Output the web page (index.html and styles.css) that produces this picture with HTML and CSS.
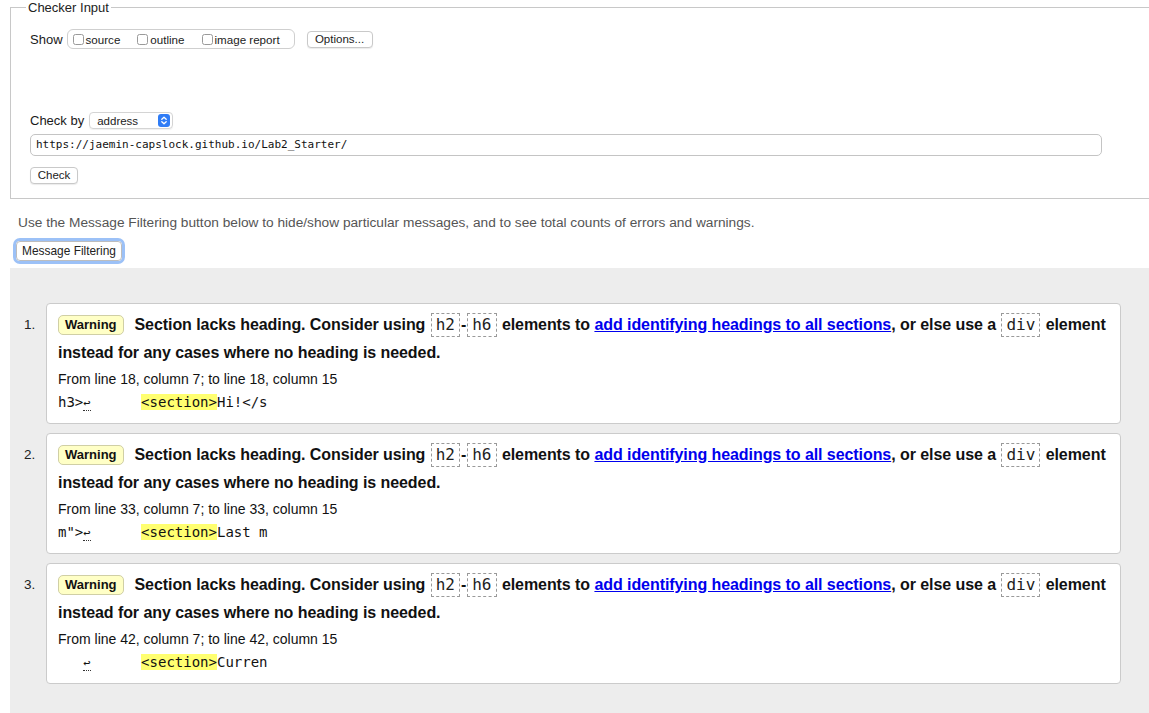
FILE: index.html
```html
<!DOCTYPE html>
<html lang="en">
<head>
<meta charset="utf-8">
<title>Checker</title>
<link rel="stylesheet" href="styles.css">
</head>
<body>
<fieldset class="checker">
  <legend class="legend">Checker Input</legend>
  <div class="show-row">
    <span class="label">Show</span>
    <span class="group">
      <label class="opt"><input type="checkbox" class="cb">source</label>
      <label class="opt"><input type="checkbox" class="cb">outline</label>
      <label class="opt"><input type="checkbox" class="cb">image report</label>
    </span>
    <button class="btn btn-options">Options...</button>
  </div>
  <div class="checkby-row">
    <span class="label">Check by</span>
    <span class="select">address
      <svg class="stepper" width="12" height="13" viewBox="0 0 12 13"><rect width="12" height="13" rx="3" fill="#2f7cf6"/><path d="M3.8 5.2 L6 3.2 L8.2 5.2 M3.8 7.8 L6 9.8 L8.2 7.8" fill="none" stroke="#fff" stroke-width="1.3" stroke-linecap="round" stroke-linejoin="round"/></svg>
    </span>
  </div>
  <div class="url">https://jaemin-capslock.github.io/Lab2_Starter/</div>
  <div class="check-row"><button class="btn btn-check">Check</button></div>
</fieldset>

<p class="hint">Use the Message Filtering button below to hide/show particular messages, and to see total counts of errors and warnings.</p>
<div class="filter-wrap"><button class="btn btn-filter">Message Filtering</button></div>

<div class="results">
  <ol class="list">
    <li class="item">
      <span class="num">1.</span>
      <div class="card">
        <p class="msg"><span class="badge">Warning</span>Section lacks heading. Consider using <code class="cbox">h2</code>-<code class="cbox">h6</code> elements to <a href="#" class="link">add identifying headings to all sections</a>, or else use a <code class="cbox">div</code> element instead for any cases where no heading is needed.</p>
        <p class="loc">From line 18, column 7; to line 18, column 15</p>
        <p class="extract">h3&gt;<span class="lf">↩</span>      <mark class="hl">&lt;section&gt;</mark>Hi!&lt;/s</p>
      </div>
    </li>
    <li class="item">
      <span class="num">2.</span>
      <div class="card">
        <p class="msg"><span class="badge">Warning</span>Section lacks heading. Consider using <code class="cbox">h2</code>-<code class="cbox">h6</code> elements to <a href="#" class="link">add identifying headings to all sections</a>, or else use a <code class="cbox">div</code> element instead for any cases where no heading is needed.</p>
        <p class="loc">From line 33, column 7; to line 33, column 15</p>
        <p class="extract">m"&gt;<span class="lf">↩</span>      <mark class="hl">&lt;section&gt;</mark>Last m</p>
      </div>
    </li>
    <li class="item">
      <span class="num">3.</span>
      <div class="card">
        <p class="msg"><span class="badge">Warning</span>Section lacks heading. Consider using <code class="cbox">h2</code>-<code class="cbox">h6</code> elements to <a href="#" class="link">add identifying headings to all sections</a>, or else use a <code class="cbox">div</code> element instead for any cases where no heading is needed.</p>
        <p class="loc">From line 42, column 7; to line 42, column 15</p>
        <p class="extract">   <span class="lf">↩</span>      <mark class="hl">&lt;section&gt;</mark>Curren</p>
      </div>
    </li>
  </ol>
</div>
</body>
</html>
```

FILE: styles.css
```css
html, body {
  overflow: hidden;
}
body {
  margin: 0;
  font-family: "Liberation Sans", Arial, Helvetica, sans-serif;
  color: #1a1a1a;
  font-size: 13px;
  background: #fff;
}

.checker {
  margin: 0 -40px 0 10px;
  padding: 0 19px 14px 19px;
  border: 1px solid #c8c8c8;
  border-right: none;
  min-inline-size: 0;
}
.legend {
  margin-left: -4px;
  padding: 0 2px;
  font-size: 13px;
  line-height: 15px;
  color: #222;
}

.label {
  font-size: 13px;
  color: #1a1a1a;
}

.show-row {
  display: flex;
  align-items: center;
  margin-top: 14px;
  height: 20px;
}
.show-row .label {
  margin-right: 4px;
}
.group {
  display: flex;
  align-items: center;
  height: 18px;
  border: 1px solid #cfcfcf;
  border-radius: 6px;
  padding: 0 6px 0 5px;
  width: 215px;
}
.opt {
  display: flex;
  align-items: center;
  font-size: 11.6px;
  color: #222;
  margin-right: 17px;
}
.opt:last-child {
  margin-right: 0;
}
.cb {
  appearance: none;
  -webkit-appearance: none;
  width: 11px;
  height: 11px;
  margin: 0 2px 0 0;
  border: 1px solid #9a9a9a;
  border-radius: 2.5px;
  background: #fff;
}

.btn {
  font-family: "Liberation Sans", Arial, Helvetica, sans-serif;
  font-size: 11.5px;
  color: #222;
  background: #fff;
  border: 1px solid #c9c9c9;
  border-radius: 4px;
  box-shadow: 0 1px 1px rgba(0,0,0,0.08);
  padding: 0 7px;
  height: 17px;
  line-height: 15px;
}
.btn-options {
  margin-left: 12px;
  width: 66px;
}

.checkby-row {
  display: flex;
  align-items: center;
  margin-top: 63px;
  height: 17px;
}
.checkby-row .label {
  margin-right: 5px;
}
.select {
  display: flex;
  align-items: center;
  justify-content: space-between;
  box-sizing: border-box;
  width: 84px;
  height: 17px;
  padding: 0 2px 0 7px;
  border: 1px solid #d4d4d4;
  border-radius: 4px;
  box-shadow: 0 1px 1px rgba(0,0,0,0.06);
  font-size: 11.5px;
  color: #222;
}
.stepper {
  display: block;
}

.url {
  box-sizing: border-box;
  margin-top: 5px;
  width: 1072px;
  height: 22px;
  border: 1px solid #c4c4c4;
  border-radius: 5px;
  padding: 0 5px;
  font-family: "DejaVu Sans Mono", "Liberation Mono", monospace;
  font-size: 11px;
  line-height: 20px;
  color: #111;
}

.check-row {
  margin-top: 11px;
  display: flex;
}
.btn-check {
  width: 48px;
  padding: 0;
}

.hint {
  margin: 16px 0 0 18px;
  font-size: 13.7px;
  line-height: 16px;
  color: #555;
}

.filter-wrap {
  margin: 7px 0 0 13px;
  display: inline-flex;
  border: 3px solid #9cc1f7;
  border-radius: 7px;
}
.btn-filter {
  height: 20px;
  width: 106px;
  padding: 0;
  font-size: 11.9px;
  border-radius: 4px;
  box-shadow: none;
  border-color: #bdbdbd;
}

.results {
  margin: 4px -40px 0 10px;
  background: #ededed;
  padding: 35px 0 34px 0;
}
.list {
  list-style: none;
  margin: 0;
  padding: 0;
  width: 1111px;
  display: flex;
  flex-direction: column;
  gap: 9px;
}
.item {
  display: grid;
  grid-template-columns: 36px 1fr;
  align-items: start;
}
.num {
  font-size: 13.5px;
  line-height: 28px;
  padding-top: 8px;
  padding-left: 14px;
  color: #222;
}
.card {
  background: #fff;
  border: 1px solid #cbcbcb;
  border-radius: 4px;
  padding: 7px 12px 9px 11px;
}
.msg {
  margin: 0;
  font-size: 16px;
  font-weight: bold;
  line-height: 28px;
  letter-spacing: -0.07px;
  color: #111;
}
.badge {
  display: inline-block;
  font-size: 13px;
  line-height: 18px;
  padding: 0 6px;
  border: 1px solid #d0cfa5;
  border-radius: 5px;
  background: #ffffc6;
  margin-right: 11px;
  vertical-align: 1px;
  letter-spacing: 0;
  color: #111;
}
.cbox {
  display: inline-block;
  font-family: "DejaVu Sans Mono", "Liberation Mono", monospace;
  font-weight: normal;
  font-size: 16px;
  line-height: 22px;
  padding: 0 4px;
  border: 1px dashed #9a9a9a;
  color: #222;
  margin: 0 1px;
  letter-spacing: 0;
}
.link {
  color: #0000ee;
  text-decoration: underline;
}
.loc {
  margin: 2px 0 0 0;
  font-size: 14px;
  line-height: 20px;
  color: #111;
}
.extract {
  margin: 2px 0 0 0;
  font-family: "DejaVu Sans Mono", "Liberation Mono", monospace;
  font-size: 14px;
  line-height: 22px;
  white-space: pre;
  color: #111;
}
.lf {
  font-size: 12px;
  border-bottom: 1px dotted #333;
  padding-bottom: 0;
}
.hl {
  background: #ffff70;
  color: #111;
}
```
